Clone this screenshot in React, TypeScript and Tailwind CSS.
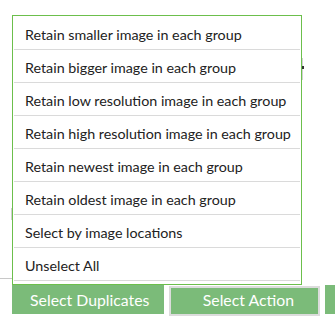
import React from "react";

const items = [
  "Retain smaller image in each group",
  "Retain bigger image in each group",
  "Retain low resolution image in each group",
  "Retain high resolution image in each group",
  "Retain newest image in each group",
  "Retain oldest image in each group",
  "Select by image locations",
  "Unselect All",
];

export default function App() {
  return (
    <div
      className="relative w-[335px] h-[320px] overflow-hidden bg-white flex flex-col"
      style={{ fontFamily: 'Lato, "Open Sans", sans-serif' }}
    >
      {/* background content peeking out */}
      <div className="h-[285px] flex flex-col">
        <div className="h-[58px]" />
        <div className="flex justify-end pr-[32px]">
          <div className="w-[1px] h-[22px] bg-[#d0d0d0]">
            <div className="w-[2px] h-[3px] bg-[#333] mt-[8px]" />
          </div>
        </div>
        <div className="h-[128px]" />
        <div className="ml-[11px] w-[1px] h-[12px] bg-[#cfcfcf]" />
        <div className="h-[58px]" />
        <div className="w-[14px] h-[1px] bg-[#c8c8c8]" />
      </div>
      <div className="flex items-start gap-[5px] pl-[12px]">
        <button className="w-[155px] h-[29px] bg-[#7bbb79] text-white text-[15.8px] leading-none flex items-center justify-center whitespace-nowrap pl-[4px]">
          Select Duplicates
        </button>
        <button className="w-[155px] h-[30px] mt-[1px] border-[2px] border-[#dcdcdc] bg-[#7bbb79] text-white text-[15.8px] leading-none flex items-center justify-center whitespace-nowrap pl-[8px] pb-[2px]">
          Select Action
        </button>
        <div className="w-[10px] h-[29px] bg-[#7bbb79]" />
      </div>

      {/* dropdown menu overlay */}
      <div className="absolute left-[12px] top-[15px] w-[290px] h-[270px] bg-white border border-[#6cbf4c] px-[1px] pt-[1px]">
        {items.map((t) => (
          <div
            key={t}
            className="h-[33px] border-b border-[#dadada] pl-[11px] pt-[3px] flex items-center text-[14.3px] text-[#222] whitespace-nowrap"
          >
            {t}
          </div>
        ))}
      </div>
    </div>
  );
}
